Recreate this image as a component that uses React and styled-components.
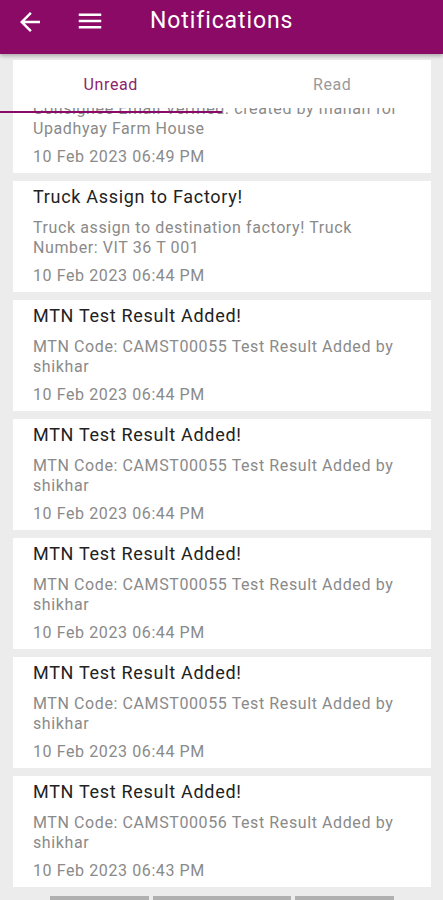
import React from "react";
import styled, { createGlobalStyle } from "styled-components";

const PURPLE = "#8b0a66";

const GlobalStyle = createGlobalStyle`
  html, body { margin: 0; padding: 0; background: #ececec; }
  body { font-family: Roboto, "Noto Sans", Arial, sans-serif; }
  * { box-sizing: border-box; }
`;

const Screen = styled.div`
  width: 443px;
  height: 900px;
  overflow: hidden;
  background: #ececec;
  display: flex;
  flex-direction: column;
`;

const Header = styled.header`
  flex: 0 0 54px;
  height: 54px;
  background: ${PURPLE};
  display: flex;
  align-items: center;
  padding: 0 0 12px 15px;
  box-shadow: 0 2px 4px rgba(0, 0, 0, 0.28);
  position: relative;
  z-index: 3;
`;

const IconButton = styled.span`
  width: 30px;
  height: 30px;
  display: flex;
  align-items: center;
  justify-content: center;
  margin-right: ${(p) => p.$gap}px;
  margin-top: ${(p) => p.$dy || 0}px;
  color: #fff;
`;

const Title = styled.h1`
  margin: 0;
  font-size: 23px;
  line-height: 30px;
  font-weight: 400;
  color: #fff;
  letter-spacing: 0.9px;
`;

const TabBar = styled.nav`
  position: relative;
  flex: 0 0 48px;
  margin-top: 6px;
  display: flex;
  z-index: 2;
  background: linear-gradient(
    to right,
    #ececec 13px,
    #fff 13px,
    #fff calc(100% - 12px),
    #ececec calc(100% - 12px)
  );
`;

const Tab = styled.div`
  flex: 1;
  display: flex;
  align-items: center;
  justify-content: center;
  font-size: 16px;
  letter-spacing: 0.6px;
  color: ${(p) => (p.$active ? "#8d1f6d" : "#9a9a9a")};
`;

const Indicator = styled.div`
  position: absolute;
  top: 51px;
  left: 0;
  width: 50%;
  height: 2px;
  background: ${PURPLE};
`;

const Viewport = styled.main`
  flex: 1;
  overflow: hidden;
`;

const List = styled.div`
  display: flex;
  flex-direction: column;
  gap: 8px;
  margin-top: -46px;
  padding: 0 12px 0 13px;
`;

const Card = styled.div`
  background: #fff;
  padding: 5px 24px 6px 20px;
  height: 111px;
`;

const CardTitle = styled.div`
  font-size: 18px;
  line-height: 22px;
  letter-spacing: 0.7px;
  color: #222;
`;

const CardText = styled.div`
  margin-top: 10px;
  font-size: 16px;
  line-height: 20px;
  letter-spacing: 0.6px;
  color: #8a8a8a;
`;

const CardDate = styled.div`
  margin-top: 8px;
  font-size: 16px;
  line-height: 20px;
  letter-spacing: 0.6px;
  color: #8a8a8a;
`;

const BottomBars = styled.div`
  display: flex;
  gap: 4px;
  padding-left: 50px;
  margin-top: 9px;
`;

const Bar = styled.div`
  width: ${(p) => p.$w}px;
  height: 4px;
  background: #b0b0b0;
`;

const BackIcon = () => (
  <svg width="30" height="30" viewBox="0 0 24 24" fill="currentColor">
    <path d="M20 11H7.83l5.59-5.59L12 4l-8 8 8 8 1.41-1.41L7.83 13H20v-2z" />
  </svg>
);

const MenuIcon = () => (
  <svg width="30" height="30" viewBox="0 0 24 24" fill="currentColor">
    <path d="M3 18h18v-2H3v2zm0-5h18v-2H3v2zm0-7v2h18V6H3z" />
  </svg>
);

const notifications = [
  {
    title: "Consignee Email Verified!",
    text: "Consignee Email Verified. created by manan for Upadhyay Farm House",
    date: "10 Feb 2023 06:49 PM",
  },
  {
    title: "Truck Assign to Factory!",
    text: "Truck assign to destination factory! Truck Number: VIT 36 T 001",
    date: "10 Feb 2023 06:44 PM",
  },
  {
    title: "MTN Test Result Added!",
    text: "MTN Code: CAMST00055 Test Result Added by shikhar",
    date: "10 Feb 2023 06:44 PM",
  },
  {
    title: "MTN Test Result Added!",
    text: "MTN Code: CAMST00055 Test Result Added by shikhar",
    date: "10 Feb 2023 06:44 PM",
  },
  {
    title: "MTN Test Result Added!",
    text: "MTN Code: CAMST00055 Test Result Added by shikhar",
    date: "10 Feb 2023 06:44 PM",
  },
  {
    title: "MTN Test Result Added!",
    text: "MTN Code: CAMST00055 Test Result Added by shikhar",
    date: "10 Feb 2023 06:44 PM",
  },
  {
    title: "MTN Test Result Added!",
    text: "MTN Code: CAMST00056 Test Result Added by shikhar",
    date: "10 Feb 2023 06:43 PM",
  },
];

export default function App() {
  return (
    <>
      <GlobalStyle />
      <Screen>
        <Header>
          <IconButton $gap={30} $dy={1}>
            <BackIcon />
          </IconButton>
          <IconButton $gap={45}>
            <MenuIcon />
          </IconButton>
          <Title>Notifications</Title>
        </Header>
        <TabBar>
          <Tab $active>Unread</Tab>
          <Tab>Read</Tab>
          <Indicator />
        </TabBar>
        <Viewport>
          <List>
            {notifications.map((n, i) => (
              <Card key={i}>
                <CardTitle>{n.title}</CardTitle>
                <CardText>{n.text}</CardText>
                <CardDate>{n.date}</CardDate>
              </Card>
            ))}
          </List>
          <BottomBars>
            <Bar $w={99} />
            <Bar $w={138} />
            <Bar $w={99} />
          </BottomBars>
        </Viewport>
      </Screen>
    </>
  );
}
